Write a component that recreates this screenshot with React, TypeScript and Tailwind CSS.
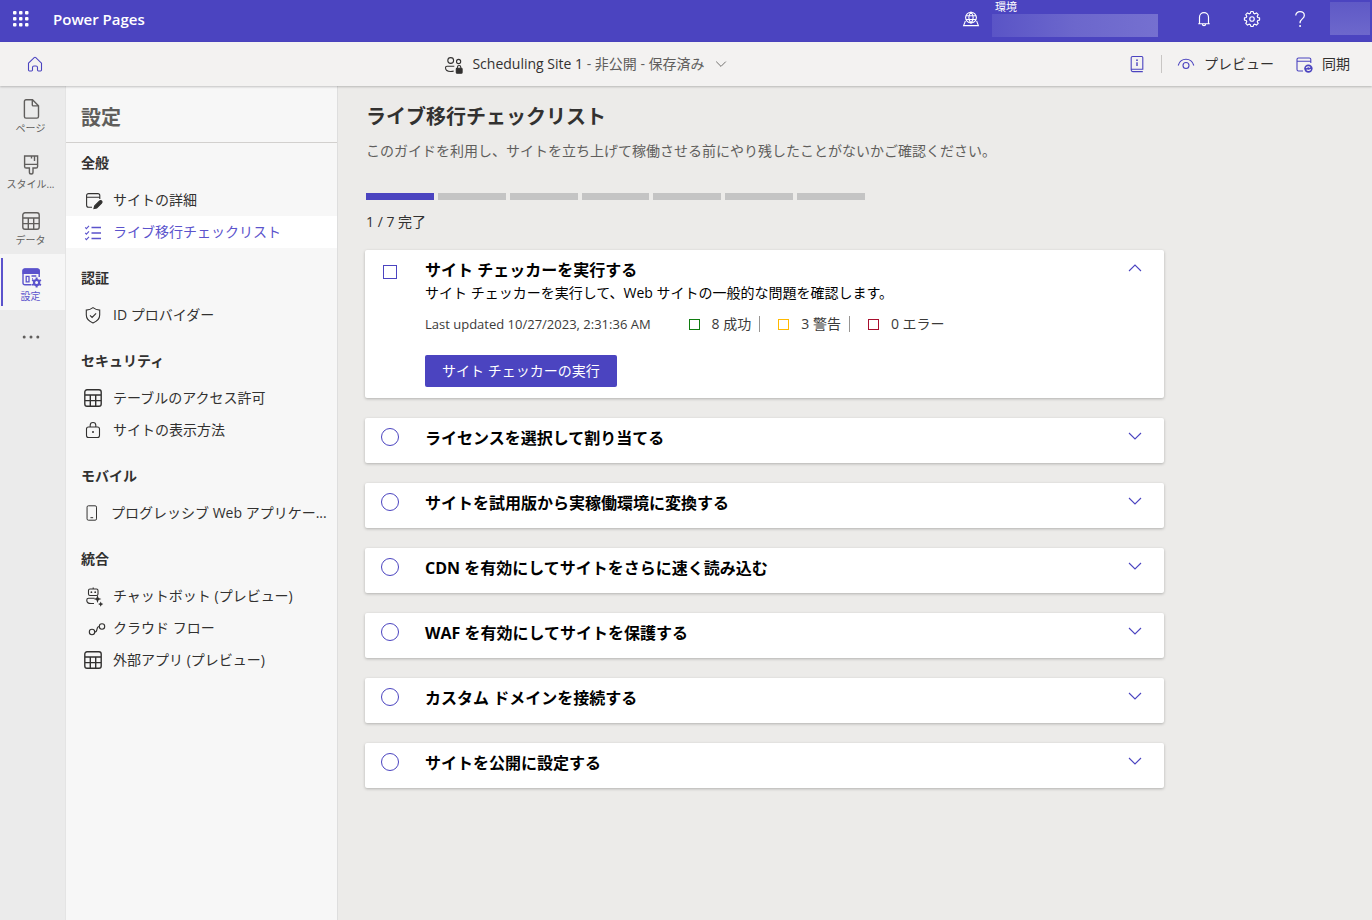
import { useState, ReactNode } from 'react';

const ICONS: Record<string, ReactNode> = {
  home: <path d="M3.5 9.2 9.2 3.6a1.2 1.2 0 0 1 1.6 0l5.7 5.6v6.9a.9.9 0 0 1-.9.9h-2.2a.9.9 0 0 1-.9-.9v-2.6a1.5 1.5 0 0 0-1.5-1.5H9a1.5 1.5 0 0 0-1.500 1.500v2.600a.9.9 0 0 1-.9.9H4.400a.9.9 0 0 1-.9-.9z" />,
  page: <path d="M5 .8h6.500l6 6V17.500a1.600 1.600 0 0 1-1.600 1.600H5a1.600 1.600 0 0 1-1.600-1.600V2.400A1.600 1.600 0 0 1 5 .8zM11.300 1V5.900a1 1 0 0 0 1 1h5" strokeWidth="1.400" />,
  brush: <path d="M3.600 1h13v10.400a1.600 1.600 0 0 1-1.600 1.600H12v4.200a1.800 1.800 0 0 1-3.600 0V13H5.200a1.600 1.600 0 0 1-1.600-1.600zM3.600 9.400h13M10.500 1v2.600M13.500 1v5" strokeWidth="1.400" />,
  table: <path d="M4 1.800h12a2.200 2.200 0 0 1 2.200 2.200v12a2.200 2.200 0 0 1-2.200 2.200H4A2.200 2.200 0 0 1 1.800 16V4A2.200 2.200 0 0 1 4 1.800zM1.800 7h16.400M1.800 12.600h16.400M7.300 7v11.200M12.700 7v11.200" strokeWidth="1.400" />,
  settings: (
    <>
      <path d="M10.500 17.800H3.800A1.800 1.800 0 0 1 2 16V4a2 2 0 0 1 2-2h12.200a2 2 0 0 1 2 2v6" strokeWidth="1.400" />
      <path d="M2 6.500V4a2 2 0 0 1 2-2h12.200a2 2 0 0 1 2 2v2.500z" fill="currentColor" />
      <path d="M5.200 9.300h2.800v5.500H5.200zM10.500 9h4.800M11 11.800h1" strokeWidth="1.300" />
      <circle cx="15.600" cy="15.600" r="2.600" strokeWidth="2.200" />
      <path d="M15.600 10.600v2M15.600 18.500v2M11.200 13l1.900 1.100M18 17l1.900 1.100M11.200 18.100l1.900-1.100M18 14.100l1.900-1.100" strokeWidth="2" />
    </>
  ),
  more: (
    <g fill="currentColor" stroke="none">
      <circle cx="3.200" cy="9" r="1.500" />
      <circle cx="10" cy="9" r="1.500" />
      <circle cx="16.800" cy="9" r="1.500" />
    </g>
  ),
  siteDetails: (
    <>
      <path d="M9 17.300H5.600a2 2 0 0 1-2-2V5.600a2 2 0 0 1 2-2h9.200a2 2 0 0 1 2 2V9M3.600 7.200h13.200" />
      <path d="m11 18.500.7-2.600 4.900-4.900a1.300 1.300 0 0 1 2 2l-4.900 4.900z" fill="currentColor" />
    </>
  ),
  checklist: (
    <>
      <path d="M8.500 5.500H18M8.500 11H18M8.500 16.500H18" strokeWidth="1.500" />
      <path d="m2.200 5.400 1.200 1.200 2.600-2.700M2.200 10.900l1.200 1.200L6 9.400M2.200 16.400l1.200 1.200 2.600-2.700" />
    </>
  ),
  shield: <path d="M10 2.600c2.200 1.700 4.300 2.300 6.700 2.500V10c0 3.700-2.300 6.200-6.700 7.900C5.600 16.200 3.300 13.700 3.300 10V5.100C5.700 4.900 7.800 4.300 10 2.600zM7 10.300l2.100 2.100 4-4.100" />,
  lock: (
    <>
      <rect x="3.500" y="7" width="13" height="10.500" rx="2" />
      <path d="M7.200 7V5.300a2.800 2.800 0 0 1 5.600 0V7" />
      <circle cx="10" cy="12" r="1" fill="currentColor" stroke="none" />
    </>
  ),
  phone: <path d="M6 2h7.500A1.500 1.500 0 0 1 15 3.500v13a1.500 1.500 0 0 1-1.500 1.500H6a1.500 1.500 0 0 1-1.500-1.500v-13A1.500 1.500 0 0 1 6 2zM8.300 15.200h3" />,
  bot: (
    <>
      <rect x="5.500" y="3" width="9.500" height="6.500" rx="1.500" />
      <path d="M10.200 1.500V3M11 17.500H8c-3 0-4.200-1-4.200-2.900v-.6a1.800 1.800 0 0 1 1.800-1.800h6" />
      <circle cx="8.400" cy="6.200" r=".9" fill="currentColor" stroke="none" />
      <circle cx="12.200" cy="6.200" r=".9" fill="currentColor" stroke="none" />
      <path d="m14.500 9.100 1.100 2.800 2.800 1.100-2.800 1.100-1.100 2.800-1.100-2.800-2.800-1.100 2.800-1.100zM17.700 15.500l.8 1.800 1.800.8-1.800.8-.8 1.800-.8-1.800-1.800-.8 1.800-.8z" fill="currentColor" stroke="none" />
    </>
  ),
  flow: (
    <>
      <circle cx="9" cy="14" r="2.700" />
      <circle cx="19" cy="8.500" r="2.700" />
      <path d="M11.700 14c3.500 0 1-5.500 4.600-5.500" />
    </>
  ),
  people: (
    <>
      <circle cx="6.700" cy="6.500" r="2.900" />
      <circle cx="14.600" cy="7.500" r="2.100" />
      <path d="M10.300 12.300H3a1.500 1.500 0 0 0-1.500 1.500c0 2.400 2.100 3.700 5.200 3.700 1.200 0 2.200-.2 3-.5" />
      <path d="M13.400 14.500v-1.300a1.700 1.700 0 0 1 3.400 0v1.300" />
      <rect x="12.300" y="14.300" width="5.800" height="5" rx=".8" fill="currentColor" />
    </>
  ),
  info: (
    <>
      <path d="M15.800 15V3.500a1 1 0 0 0-1-1H5.600A1.400 1.400 0 0 0 4.200 4v12a1.600 1.600 0 0 0 1.600 1.600h10M4.200 15.200h11.600V3.500" />
      <path d="M10 8.300V12" strokeWidth="1.400" />
      <circle cx="10" cy="6.200" r=".9" fill="currentColor" stroke="none" />
    </>
  ),
  eye: (
    <>
      <path d="M2.200 11.500C3.300 7.600 6.300 5.300 10 5.300s6.700 2.300 7.800 6.200" />
      <circle cx="10" cy="11.500" r="3" />
    </>
  ),
  sync: (
    <>
      <path d="M9 17H4.500a1.500 1.500 0 0 1-1.500-1.500v-10A1.500 1.500 0 0 1 4.500 4h10.800a1.500 1.500 0 0 1 1.500 1.500V9M3 7.200h13.800" />
      <circle cx="14.400" cy="14.600" r="4.200" fill="currentColor" stroke="none" />
      <path d="M12.200 14c.5-1.200 2.700-1.700 3.900-.5M16.600 15.200c-.5 1.200-2.700 1.700-3.900.5" stroke="#f3f2f1" />
    </>
  ),
  globe: (
    <>
      <circle cx="10" cy="8.600" r="5.400" />
      <path d="M10 3.200c-2.900 3-2.900 7.800 0 10.800 2.900-3 2.900-7.800 0-10.800zM4.900 6.800h10.200M4.900 10.500h10.200M4.400 12l-1.800 4.600h14.800L15.600 12" />
    </>
  ),
  bell: <path d="M3.600 15.300h12.800M5 15V8a5 5 0 0 1 10 0v7M8.200 15.600a1.800 1.800 0 0 0 3.600 0" strokeWidth="1.300" />,
  gear: (
    <>
      <path d="M8.700 1.700h2.600l.5 2 1.400.6L15 3.200l1.900 1.900-1.100 1.800.6 1.400 2 .5v2.400l-2 .5-.6 1.400 1.100 1.800-1.900 1.900-1.800-1.100-1.400.6-.5 2H8.700l-.5-2-1.400-.6L5 16.800l-1.900-1.900 1.100-1.800-.6-1.400-2-.5V8.800l2-.5.6-1.400-1.100-1.800L5 3.200l1.800 1.100 1.400-.6z" strokeLinejoin="round" strokeWidth="1.300" />
      <circle cx="10" cy="10" r="2.500" strokeWidth="1.300" />
    </>
  ),
  help: (
    <>
      <path d="M5.300 6C5.300 3.500 7.300 1.800 10 1.800s4.800 1.600 4.800 4.300c0 3.700-4.700 3.900-4.700 7.900v.6" strokeWidth="1.400" />
      <circle cx="10.100" cy="17.700" r="1.100" fill="currentColor" stroke="none" />
    </>
  ),
  chevronDown: <path d="m4 7 6 6 6-6" />,
  chevronUp: <path d="m4 13 6-6 6 6" />,
};

function Icon({ name, className = 'size-5' }: { name: string; className?: string }) {
  return (
    <svg
      viewBox="0 0 20 20"
      className={`shrink-0 overflow-visible ${className}`}
      fill="none"
      stroke="currentColor"
      strokeWidth="1.1"
      aria-hidden="true"
    >
      {ICONS[name]}
    </svg>
  );
}

const RAIL = [
  { icon: 'page', label: 'ページ' },
  { icon: 'brush', label: 'スタイル...' },
  { icon: 'table', label: 'データ' },
  { icon: 'settings', label: '設定', active: true },
];

const MENU = [
  {
    title: '全般',
    items: [
      { icon: 'siteDetails', label: 'サイトの詳細' },
      { icon: 'checklist', label: 'ライブ移行チェックリスト', active: true },
    ],
  },
  { title: '認証', items: [{ icon: 'shield', label: 'ID プロバイダー' }] },
  {
    title: 'セキュリティ',
    items: [
      { icon: 'table', label: 'テーブルのアクセス許可' },
      { icon: 'lock', label: 'サイトの表示方法' },
    ],
  },
  { title: 'モバイル', items: [{ icon: 'phone', label: 'プログレッシブ Web アプリケー...' }] },
  {
    title: '統合',
    items: [
      { icon: 'bot', label: 'チャットボット (プレビュー)' },
      { icon: 'flow', label: 'クラウド フロー' },
      { icon: 'table', label: '外部アプリ (プレビュー)' },
    ],
  },
];

const STEPS = [
  'サイト チェッカーを実行する',
  'ライセンスを選択して割り当てる',
  'サイトを試用版から実稼働環境に変換する',
  'CDN を有効にしてサイトをさらに速く読み込む',
  'WAF を有効にしてサイトを保護する',
  'カスタム ドメインを接続する',
  'サイトを公開に設定する',
];

const RESULTS = [
  { label: '8 成功', box: 'border-[#107c10]' },
  { label: '3 警告', box: 'border-[#ffb900]' },
  { label: '0 エラー', box: 'border-[#a80f2e]' },
];

function TopBar() {
  return (
    <header className="flex h-[42px] items-center bg-[#4b44c0] text-white">
      <button type="button" aria-label="アプリ起動ツール" className="flex h-full w-[42px] items-center justify-center pb-1">
        <svg viewBox="0 0 16 16" className="size-4" fill="currentColor" aria-hidden="true">
          {[0, 6, 12].map((y) => [0, 6, 12].map((x) => <rect key={`${x}-${y}`} x={x} y={y} width="3.500" height="3.500" rx="1" />))}
        </svg>
      </button>
      <span className="ml-[11px] pb-1 text-[15px] font-semibold">Power Pages</span>
      <div className="ml-auto flex h-full items-center">
        <Icon name="globe" className="mb-1 size-5" />
        <div className="ml-[11px] w-[166px] self-start">
          <div className="h-[14px] pl-[3px] text-[11px] leading-[14px]">環境</div>
          <div className="h-[23px] bg-linear-to-r from-[#5a54c6] via-[#6c67cc] to-[#7570d0]" />
        </div>
        <div className="ml-[22px] flex pb-1">
          <button type="button" aria-label="通知" className="flex w-12 justify-center"><Icon name="bell" className="size-[18px]" /></button>
          <button type="button" aria-label="設定" className="flex w-12 justify-center"><Icon name="gear" className="size-[18px]" /></button>
          <button type="button" aria-label="ヘルプ" className="flex w-12 justify-center"><Icon name="help" className="size-[18px]" /></button>
        </div>
        <div className="mt-[2px] mr-[2px] ml-[6px] h-[33px] w-10 self-start bg-linear-to-b from-[#5f59c6] to-[#6d68cc]" />
      </div>
    </header>
  );
}

function CommandBar() {
  return (
    <div className="relative z-10 flex h-[44px] items-center bg-[#f3f2f1] text-sm text-[#323130] shadow-[0_1px_2px_rgba(0,0,0,0.22)]">
      <button type="button" aria-label="ホーム" className="flex w-[70px] justify-center text-[#4b44c0]"><Icon name="home" /></button>
      <button type="button" className="flex flex-1 items-center justify-center">
        <Icon name="people" />
        <span className="ml-2">Scheduling Site 1 <span className="text-[#605e5c]">- 非公開 - 保存済み</span></span>
        <Icon name="chevronDown" className="ml-2 size-4 text-[#605e5c]" />
      </button>
      <div className="flex items-center pr-[22px] pl-6">
        <button type="button" aria-label="情報" className="text-[#4b44c0]"><Icon name="info" /></button>
        <span className="mx-[14px] h-[18px] w-px bg-[#c8c6c4]" />
        <button type="button" className="flex items-center gap-2">
          <Icon name="eye" className="size-5 text-[#4b44c0]" />
          プレビュー
        </button>
        <button type="button" className="ml-5 flex items-center gap-2">
          <Icon name="sync" className="size-5 text-[#4b44c0]" />
          同期
        </button>
      </div>
    </div>
  );
}

function Rail() {
  return (
    <nav className="flex w-[66px] shrink-0 flex-col border-r border-[#e4e4e4] bg-[#ebebeb] text-[#605e5c]">
      {RAIL.map((item) => (
        <a
          key={item.label}
          href="#"
          className={`relative flex h-14 flex-col items-center gap-[2px] pt-[13px] pr-1 text-[10px] leading-[14px] ${
            item.active ? 'bg-[#f6f6f6] text-[#5b53cc]' : ''
          }`}
        >
          {item.active && <span className="absolute top-1 left-px h-12 w-[2px] bg-[#5b53cc]" />}
          <Icon name={item.icon} />
          {item.label}
        </a>
      ))}
      <button type="button" aria-label="その他" className="flex h-14 items-center justify-center pr-1"><Icon name="more" /></button>
    </nav>
  );
}

function SidePanel() {
  return (
    <aside className="w-[272px] shrink-0 border-r border-[#dedede] bg-[#f7f7f7] text-sm text-[#323130]">
      <h2 className="flex h-[57px] items-center border-b border-[#d2d0ce] px-[15px] pt-2 text-xl font-bold text-[#605e5c]">設定</h2>
      <div className="-mt-[10px]">
        {MENU.map((group) => (
          <section key={group.title} className="pt-5">
            <h3 className="mb-[11px] px-[15px] leading-5 font-bold">{group.title}</h3>
            {group.items.map((item) => (
              <a
                key={item.label}
                href="#"
                className={`flex h-8 items-center gap-[10px] pl-[17px] whitespace-nowrap ${item.active ? 'bg-white text-[#5b53cc]' : ''}`}
              >
                <Icon name={item.icon} className={item.icon === 'phone' ? 'size-[18px]' : 'size-5'} />
                {item.label}
              </a>
            ))}
          </section>
        ))}
      </div>
    </aside>
  );
}

function CheckerDetails() {
  return (
    <div className="pb-[11px] text-sm">
      <p className="leading-5 text-black">サイト チェッカーを実行して、Web サイトの一般的な問題を確認します。</p>
      <div className="mt-[11px] flex flex-wrap items-center leading-5 text-[#3b3a39]">
        <span className="mr-[38px] text-[13px]">Last updated 10/27/2023, 2:31:36 AM</span>
        {RESULTS.map((result, i) => (
          <span key={result.label} className="flex items-center">
            <span className={`mr-3 size-[11px] border ${result.box}`} />
            {result.label}
            {i < RESULTS.length - 1 && <span className="mr-[18px] ml-2 h-4 w-px bg-[#979593]" />}
          </span>
        ))}
      </div>
      <button type="button" className="mt-[21px] h-8 rounded-xs bg-[#4b44c0] px-[17px] text-white">
        サイト チェッカーの実行
      </button>
    </div>
  );
}

export default function App() {
  const [openStep, setOpenStep] = useState<number | null>(0);

  return (
    <div className="flex min-h-screen flex-col bg-[#ecebe9] font-['Open_Sans','Noto_Sans_CJK_JP',sans-serif]" lang="ja">
      <TopBar />
      <CommandBar />
      <div className="flex flex-1">
        <Rail />
        <SidePanel />
        <main className="min-w-0 flex-1 pt-[17px] pr-6 pb-8 pl-[27px] text-[#323130]">
          <div className="px-px">
            <h1 className="text-xl leading-7 font-bold">ライブ移行チェックリスト</h1>
            <p className="mt-[10px] text-sm text-[#605e5c]">
              このガイドを利用し、サイトを立ち上げて稼働させる前にやり残したことがないかご確認ください。
            </p>

            {/* Progress */}
            <div className="mt-8 flex max-w-[499px] gap-1">
              {STEPS.map((step, i) => (
                <div key={step} className={`h-[7px] flex-1 ${i === 0 ? 'bg-[#4b44c0]' : 'bg-[#c4c4c4]'}`} />
              ))}
            </div>
            <p className="mt-3 text-sm">1 / 7 完了</p>
          </div>

          <ul className="mt-[18px] flex max-w-[799px] flex-col gap-5">
            {STEPS.map((step, i) => {
              const open = openStep === i;
              return (
                <li key={step} className="flex items-start rounded-xs bg-white px-[15px] pt-[10px] shadow-[0_1px_3px_rgba(0,0,0,0.25)]">
                  <div className={`flex w-5 shrink-0 items-center justify-center ${i === 0 ? 'h-6' : 'h-[18px]'}`}>
                    <input
                      id={`step-${i}`}
                      type="checkbox"
                      className={`appearance-none border border-[#4b44c0] checked:bg-[#4b44c0] ${i === 0 ? 'size-[14px]' : 'size-[18px] rounded-full'}`}
                    />
                  </div>
                  <div className="ml-[25px] min-w-0 flex-1">
                    <label htmlFor={`step-${i}`} className={`block leading-5 font-bold text-black ${open ? 'pb-[3px]' : 'pb-[15px]'}`}>
                      {step}
                    </label>
                    {open && i === 0 && <CheckerDetails />}
                  </div>
                  <button
                    type="button"
                    aria-label={step}
                    aria-expanded={open}
                    onClick={() => setOpenStep(open ? null : i)}
                    className="mr-[6px] flex size-4 items-center justify-center text-[#4b44c0]"
                  >
                    <Icon name={open ? 'chevronUp' : 'chevronDown'} />
                  </button>
                </li>
              );
            })}
          </ul>
        </main>
      </div>
    </div>
  );
}
